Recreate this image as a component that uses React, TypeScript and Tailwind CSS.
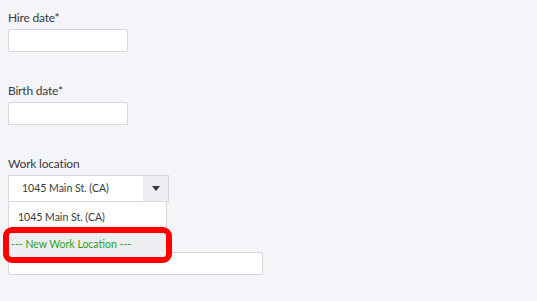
import React from "react";

const font = { fontFamily: "Lato, 'Open Sans', sans-serif" };

const Field = ({ label, children }: { label: string; children: React.ReactNode }) => (
  <div className="mb-[30px]">
    <div className="h-[18px] text-[12px] leading-[18px] tracking-[-0.2px] mb-[2px] text-[#393a3d]">{label}</div>
    {children}
  </div>
);

export default function App() {
  return (
    <div style={font} className="relative w-[537px] h-[301px] bg-[#f4f5f8] px-2 pt-[9px] overflow-hidden">
      <Field label="Hire date*">
        <div className="w-[120px] h-[23px] bg-white border border-[#d4d7dc] rounded-[2px]" />
      </Field>
      <Field label="Birth date*">
        <div className="w-[120px] h-[23px] bg-white border border-[#d4d7dc] rounded-[2px]" />
      </Field>
      <Field label="Work location">
        <div className="relative w-[161px]">
          <div className="flex h-[27px] bg-white border border-[#d4d7dc]">
            <div className="flex-1 flex items-center pl-[13px] text-[10.5px] text-[#393a3d]">1045 Main St. (CA)</div>
            <div className="w-[25px] flex items-center justify-center bg-[#eceef1]">
              <svg width="8" height="5" viewBox="0 0 8 5">
                <path d="M0 0h8L4 5z" fill="#393a3d" />
              </svg>
            </div>
          </div>
          <div className="absolute left-0 top-[27px] w-[159px] h-[56px] bg-white border-x border-[#d4d7dc] z-10">
            <div className="h-[31px] flex items-center pl-[9px] text-[10.5px] text-[#393a3d]">1045 Main St. (CA)</div>
            <div className="h-[24px] flex items-center pl-[2px] bg-[#eceef1] text-[10.5px] text-[#2ca01c]">--- New Work Location ---</div>
          </div>
          <div className="absolute left-[-5px] top-[52px] w-[169px] h-[36px] border-[6px] border-[#ff0000] rounded-[9px] z-20" />
        </div>
      </Field>
      <Field label="">
        <div className="w-[255px] h-[23px] bg-white border border-[#d4d7dc] rounded-[2px]" />
      </Field>
    </div>
  );
}
